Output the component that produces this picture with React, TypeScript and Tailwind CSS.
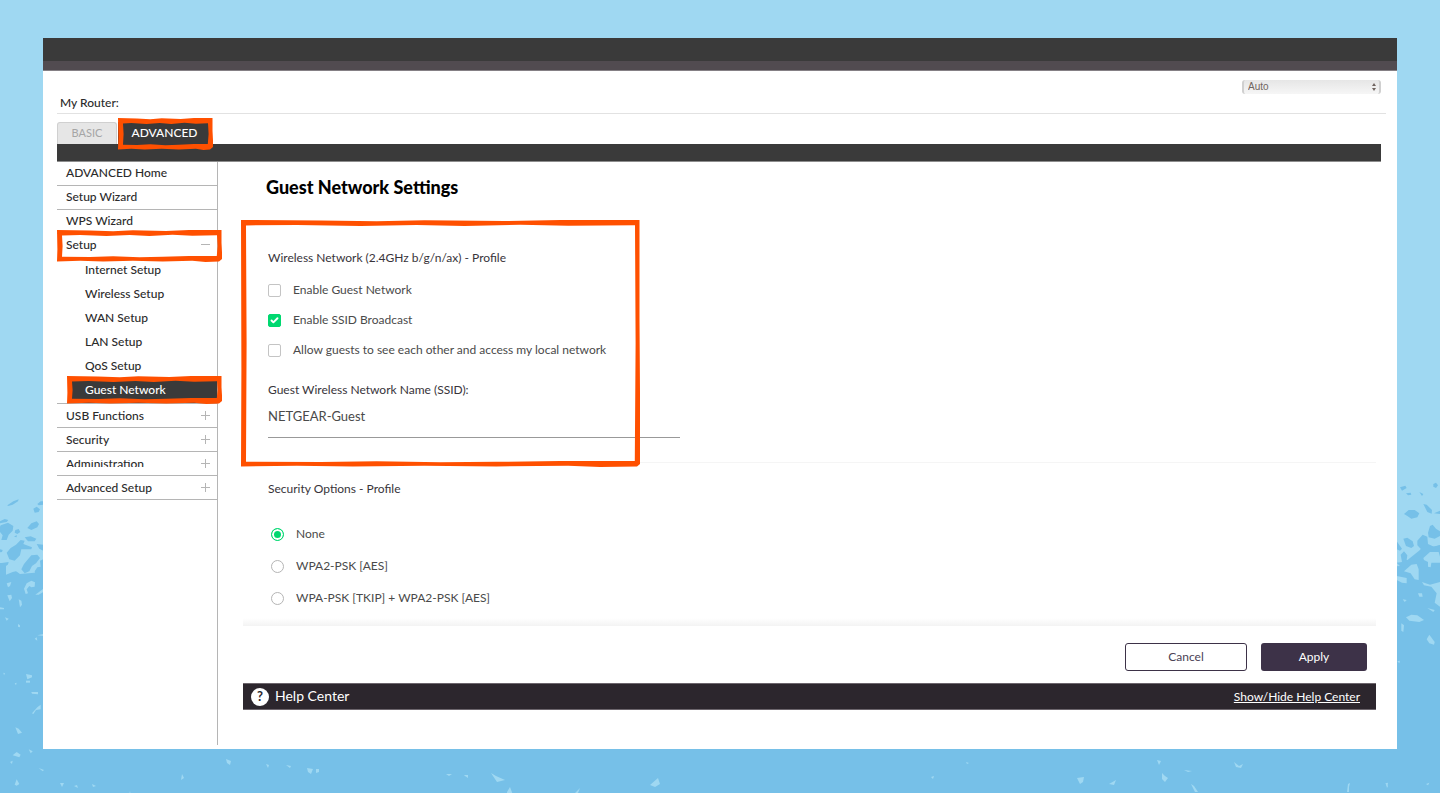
import { useState } from "react";
import { Check } from "lucide-react";

const topItems = ["ADVANCED Home", "Setup Wizard", "WPS Wizard"];
const setupItems = ["Internet Setup", "Wireless Setup", "WAN Setup", "LAN Setup", "QoS Setup"];
const bottomItems = ["USB Functions", "Security", "Administration", "Advanced Setup"];
const securityOptions = ["None", "WPA2-PSK [AES]", "WPA-PSK [TKIP] + WPA2-PSK [AES]"];

// Water texture: light sky above, darker blue below with a speckled edge
function Backdrop() {
  return (
    <svg
      className="absolute inset-0 h-full w-full"
      viewBox="0 0 1440 793"
      preserveAspectRatio="none"
      aria-hidden="true"
    >
      <rect width="1440" height="793" fill="#9fd8f2" />
      <path fill="#76c0e8" d="M0 563L6 564L20 574L43 572L100 570H1340L1400 566L1420 550L1440 545V793H0Z" />
      <g transform="translate(0 480) scale(0.33333)">
        <g fill="#76c0e8">
          <path d="M22 76L40 64L56 58L54 64L38 74L24 78Z" />
          <path d="M112 72L122 64H130V74L116 76Z" />
          <path d="M100 86L110 80L120 88L116 96L104 98Z" />
          <path d="M0 124L14 117L25 120L20 126L0 130Z" />
          <path d="M2 136L24 128L40 138L38 152L26 164L20 180L4 180L8 166L0 156V140Z" />
          <path d="M82 144L94 130L110 124L117 132L112 142L94 150Z" />
          <path d="M46 150L56 147L61 156L52 162L44 158Z" />
          <path d="M74 172L92 169L109 176L104 184L84 184Z" />
          <path d="M42 170L50 165L50 172Z" />
          <path d="M20 218L32 204L48 194L62 180L74 182L70 192L96 202L94 208L64 208L60 226L44 242L28 238Z" />
          <path d="M110 192L130 194V212L118 206Z" />
          <path d="M0 208L8 210L6 216L0 217Z" />
          <path d="M64 268L72 252L82 240L94 226L112 224L120 234L108 250L96 258L88 274L74 280Z" />
          <path d="M104 274L112 262L122 260L120 242L130 238V310H80L108 296Z" />
          <path d="M0 250L26 246L22 262L18 290H0Z" />
        </g>
        <g fill="#9fd8f2">
          <path d="M18 258L34 246L54 247L60 260L54 272L38 276L18 284Z" />
          <path d="M72 326L80 310L94 302L105 307L104 320L94 322L88 318L80 328L84 340L77 342Z" />
          <path d="M20 310L34 306L30 318L24 322Z" />
          <path d="M22 346L34 344L36 354L29 364Z" />
          <path d="M56 358L64 362L66 374L60 382Z" />
          <path d="M106 344L130 326V336L116 344Z" />
          <path d="M0 382L12 384V388H0Z" />
          <path d="M15 412L26 416L20 422Z" />
          <path d="M54 432L60 436V442L54 440Z" />
          <path d="M104 476L110 472L112 482Z" />
          <path d="M112 466L130 462V468Z" />
          <path d="M78 582L96 586L96 592L82 598Z" />
          <path d="M78 602H90V608H78Z" />
          <path d="M94 636L114 636V643L96 641Z" />
          <path d="M96 700L112 682L122 674V688L108 690L100 702Z" />
          <path d="M44 610L50 608L48 616Z" />
          <path d="M10 578L15 580L12 586Z" />
          <path d="M46 742L56 746L66 758L54 762Z" />
          <path d="M38 826L50 816L62 824L58 832Z" />
          <path d="M86 808L98 814L92 820Z" />
          <path d="M30 846L38 842L36 852Z" />
          <path d="M44 914L50 898L58 912L50 917Z" />
          <path d="M116 864L132 870L128 874Z" />
        </g>
      </g>
      <g transform="translate(1380 470) scale(0.33333)">
        <g fill="#76c0e8">
          <path d="M60 52L76 47L80 54L66 62Z" />
          <path d="M160 42L168 38L174 46L168 54L160 50Z" />
          <path d="M78 70L92 68L94 74L84 76Z" />
          <path d="M118 66L130 72L126 78Z" />
          <path d="M72 132L86 120L104 120L118 130L112 142L94 146L82 138Z" />
          <path d="M130 102L140 104L156 120L155 131L142 126Z" />
          <path d="M162 130L180 122V132Z" />
          <path d="M144 188L150 168L158 164L168 176L180 184V198L164 206L146 202Z" />
          <path d="M70 206L82 203L98 214L102 228L94 234L78 228Z" />
          <path d="M112 212L128 194L142 200L144 222L162 230L180 226V300H96L62 290L50 278L66 276L62 254L72 244L82 256L80 270L98 270L112 258L122 236L112 226Z" />
          <path d="M50 214L66 236L60 242L50 238Z" />
        </g>
        <g fill="#9fd8f2">
          <path d="M130 264L150 246H176L180 260V278H154L152 292L144 290V276L132 270Z" />
          <path d="M72 304L94 284L110 282L116 298L116 330L104 328L92 310Z" />
          <path d="M50 318L80 324L80 340L66 338L50 330Z" />
          <path d="M126 336L150 344L180 336V410L164 398L170 370L154 350L132 346Z" />
          <path d="M114 370L126 370L128 380L118 380Z" />
          <path d="M68 388L80 390L74 396Z" />
          <path d="M142 414L164 420L160 426Z" />
          <path d="M78 442L94 434L112 436L132 450L118 456L88 452Z" />
          <path d="M64 460L72 466L70 486L64 482Z" />
          <path d="M140 508L148 494L164 516L162 524L148 520Z" />
          <path d="M52 574L60 572L58 580Z" />
          <path d="M16 940L24 938L22 950Z" />
          <path d="M138 942L148 938L144 946Z" />
        </g>
      </g>
      <g fill="#9fd8f2">
        <path d="M226 759l5 2l-1 4l-3 -2zM266 764l3 1l-1 3zM286 765l5 1l-1 2zM307 768l6 1l-2 5l-3 -2zM316 769l3 0l0 3l-3 1z" />
        <path d="M182 774l2 4l-3 2zM129 795l1 -4l1 5zM128 794l2 -1l0 6l-3 1zM127 797l2 -3l1 6z" />
        <path d="M60 783h4l-2 4zM74 786l3 -1l1 3zM92 784l4 2l-3 1z" />
        <path d="M446 774h6l-3 2zM464 775h4v3l-3 -2zM491 773l5 3l9 4l-8 2zM508 800l3 -2l2 7l-4 2z" />
        <path d="M507 792l3 -5l3 8l-4 4l-2 -3zM575 793l5 -5l-2 5zM650 785l8 -7l2 6l-5 3z" />
        <path d="M966 762l3 1l-2 1zM931 777l3 -1l-1 3zM1077 778l7 -1l-1 5l-3 2zM1059 795l2 1l-2 1z" />
        <path d="M1157 760l4 1l-2 4zM1234 762l5 4l4 -2l-2 4l-5 -1zM1162 773l3 3l3 2l-3 4l-3 -3z" />
        <path d="M1184 770l8 1l-4 1zM1109 784l7 -4l-2 5zM1191 784l3 2l4 6h-3zM1347 792l1 -8l2 -1l-1 4v5zM1386 784l2 2l-1 2z" />
      </g>
    </svg>
  );
}

// Hand-drawn marker frame. Edges wander by up to a pixel along their length.
function Marker({ width: w, height: h, className }: { width: number; height: number; className: string }) {
  const outer = [
    [0, 0], [w * 0.2, 0.5], [w * 0.34, 1.2], [w * 0.46, 0.3], [w * 0.66, 1], [w * 0.8, 0], [w - 0.5, 0],
    [w - 0.5, h * 0.4], [w, h * 0.7], [w, h - 3], [w - 3, h - 0.5],
    [w * 0.9, h], [w * 0.82, h - 1.2], [w * 0.64, h - 0.6], [w * 0.46, h - 1.2], [w * 0.28, h - 0.4], [w * 0.14, h - 1.2], [0, h - 0.5],
    [0.4, h * 0.6],
  ];
  const inner = [
    [5, 5.4], [w * 0.14, 5], [w * 0.3, 6], [w * 0.44, 5], [w * 0.56, 6], [w * 0.7, 4.8], [w * 0.82, 5.8], [w - 5, 5.2],
    [w - 4.4, h * 0.5], [w - 5.2, h - 6],
    [w * 0.8, h - 6], [w * 0.64, h - 5.2], [w * 0.5, h - 4.8], [w * 0.34, h - 5.8], [w * 0.2, h - 5], [5, h - 5.2],
    [5.6, h * 0.5],
  ];
  const d = [outer, inner].map((pts) => `M${pts.map((p) => p.join(" ")).join("L")}Z`).join("");
  return (
    <svg
      className={`pointer-events-none absolute ${className}`}
      width={w}
      height={h}
      viewBox={`0 0 ${w} ${h}`}
      aria-hidden="true"
    >
      <path fill="#ff5000" fillRule="evenodd" d={d} />
    </svg>
  );
}

function CheckRow({ label, defaultChecked = false }: { label: string; defaultChecked?: boolean }) {
  return (
    <label className="flex h-5 w-fit items-center gap-3 text-[#4a4a4a]">
      <span className="grid size-[13px] place-items-center">
        <input
          type="checkbox"
          defaultChecked={defaultChecked}
          className="peer col-start-1 row-start-1 size-[13px] appearance-none rounded-xs border border-[#c4c4c4] bg-white checked:border-[#00d870] checked:bg-[#00d870]"
        />
        <Check
          className="pointer-events-none col-start-1 row-start-1 hidden size-[9px] text-white peer-checked:block"
          strokeWidth={5}
        />
      </span>
      {label}
    </label>
  );
}

function Expander({ open = false }: { open?: boolean }) {
  return (
    <svg className="size-[9px]" viewBox="0 0 9 9" stroke="#b5b5b5" aria-hidden="true">
      <path d={open ? "M0 4.5H9" : "M0 4.5H9M4.5 0V9"} />
    </svg>
  );
}

function Sidebar() {
  return (
    <nav className="w-[161px] shrink-0 self-stretch border-r border-[#b5b5b5] text-xs font-medium text-[#2b2b2b]">
      {topItems.map((item) => (
        <a key={item} href="#" className="flex h-6 items-center border-b border-[#b5b5b5] pb-0.5 pl-[9px]">
          {item}
        </a>
      ))}
      <div className="relative">
        <a href="#" className="flex h-[23px] items-center justify-between pr-[7px] pb-0.5 pl-[9px]">
          Setup
          <Expander open />
        </a>
        <Marker width={165} height={32} className="-top-1 left-0" />
      </div>
      <div className="pt-px">
        {setupItems.map((item) => (
          <a key={item} href="#" className="flex h-6 items-center pl-[28px]">
            {item}
          </a>
        ))}
      </div>
      <div className="relative ml-3 border-b border-[#3a3a3a] bg-[#3a3a3a] text-white">
        <a href="#" className="flex h-6 items-center pl-4">
          Guest Network
        </a>
        <Marker width={155} height={28} className="-top-0.5 -left-0.5" />
      </div>
      <div className="border-t border-[#b5b5b5]">
        {bottomItems.map((item) => (
          <a
            key={item}
            href="#"
            className="flex h-6 items-center justify-between border-b border-[#b5b5b5] pr-[7px] pl-[9px]"
          >
            {item === "Administration" ? (
              <span className="h-[7px] overflow-hidden leading-[7px]">{item}</span>
            ) : (
              item
            )}
            <Expander />
          </a>
        ))}
      </div>
    </nav>
  );
}

function GuestSettings() {
  const [ssid, setSsid] = useState("NETGEAR-Guest");
  const [security, setSecurity] = useState(securityOptions[0]);

  return (
    <main className="min-w-0 flex-1 pr-[21px] pb-[35px] pl-[25px] text-xs text-[#38343a]">
      <h1 className="pt-[15px] pl-[23px] text-lg leading-5 font-black text-black">Guest Network Settings</h1>

      <section className="relative mt-[23px] border-b border-[#f5f5f5] pt-7 pb-6 pl-[25px]">
        <h2 className="leading-5">Wireless Network (2.4GHz b/g/n/ax) - Profile</h2>
        <div className="mt-3 flex flex-col gap-2.5">
          <CheckRow label="Enable Guest Network" />
          <CheckRow label="Enable SSID Broadcast" defaultChecked />
          <CheckRow label="Allow guests to see each other and access my local network" />
        </div>
        <label htmlFor="ssid" className="mt-5 block w-fit leading-5">
          Guest Wireless Network Name (SSID):
        </label>
        <input
          id="ssid"
          value={ssid}
          onChange={(e) => setSsid(e.target.value)}
          className="mt-1.5 block h-8 w-[412px] border-b border-[#999] pb-[11px] text-[13px] leading-5 text-[#4a4a4a] outline-none"
        />
        <Marker width={399} height={247} className="top-0 -left-0.5" />
      </section>

      <section className="pt-4 pl-[25px]">
        <h2 className="leading-5">Security Options - Profile</h2>
        <div className="mt-[25px] flex flex-col gap-3 pl-[3px]">
          {securityOptions.map((option) => (
            <label key={option} className="flex h-5 w-fit items-center gap-3 text-[#4a4a4a]">
              <input
                type="radio"
                name="security"
                checked={security === option}
                onChange={() => setSecurity(option)}
                className="size-[13px] appearance-none rounded-full border border-[#b5b5b5] bg-white checked:border-[#00d870] checked:bg-[#00d870] checked:shadow-[inset_0_0_0_2px_white]"
              />
              {option}
            </label>
          ))}
        </div>
      </section>

      <div className="mt-2.5 h-2 bg-linear-to-b from-white to-[#f3f3f3]" />
      <div className="flex justify-end gap-3.5 pt-[17px] pr-[9px]">
        <button className="h-7 w-[122px] rounded-[3px] border border-[#3d3248] text-[#4b4255]">Cancel</button>
        <button className="h-7 w-[106px] rounded-[3px] bg-[#3d3248] text-white">Apply</button>
      </div>
      <footer className="mt-3 flex h-[27px] items-center justify-between border-y border-[#6c656c] bg-[#2c262d] pr-4 pl-2 text-white">
        <span className="flex items-center gap-1.5 text-[14px]">
          <span className="flex size-[18px] items-center justify-center rounded-full bg-white text-[13px] font-bold text-[#2c262d]">
            ?
          </span>
          Help Center
        </span>
        <a href="#" className="text-xs underline">
          Show/Hide Help Center
        </a>
      </footer>
    </main>
  );
}

export default function App() {
  return (
    <div className="relative min-h-screen px-[43px] pt-[38px] pb-11 font-['Lato','Liberation_Sans',sans-serif]">
      <Backdrop />
      <div className="relative bg-white">
        <header className="h-[33px] border-b border-[#858085] bg-[#3a3a3a] pt-[23px]">
          <div className="h-[9px] bg-[#514b50]" />
        </header>

        <div className="mr-[11px] ml-3.5 flex h-[43px] items-end justify-between border-b border-[#e2e2e2] pr-[5px] pl-[3px]">
          <span className="text-xs leading-5 font-medium text-[#2b2b2b]">My Router:</span>
          <div className="relative mb-[19px]">
            <select
              aria-label="Language"
              className="block h-3.5 w-[139px] appearance-none rounded-[3px] border-x-2 border-[#d0d0d0] bg-linear-to-b from-[#e6e6e6] to-[#f6f6f6] pl-1 font-['Liberation_Sans',sans-serif] text-[10px] leading-3 text-[#706560]"
            >
              <option>Auto</option>
            </select>
            <svg
              className="pointer-events-none absolute top-[3px] right-1 h-2 w-1.5"
              viewBox="0 0 6 8"
              fill="#706560"
              aria-hidden="true"
            >
              <path d="M1 3L3 0L5 3ZM1 5H5L3 8Z" />
            </svg>
          </div>
        </div>

        <div className="mr-4 ml-3.5">
          <div className="flex items-end pt-2">
            <button className="block h-[22px] w-[60px] rounded-t-[3px] border border-b-0 border-[#d0d0d0] bg-[#e6e6e6] text-[11px] text-[#a5a5a5]">
              BASIC
            </button>
            <div className="relative ml-px">
              <button className="block h-[22px] w-[93px] bg-[#3a3a3a] text-xs font-medium text-white">ADVANCED</button>
              <Marker width={95} height={32} className="-top-1 left-0 z-10" />
            </div>
          </div>
          <div className="h-[18px] border-b border-[#8d8d8d] bg-[#3a3a3a]" />
        </div>

        <div className="ml-3.5 flex pb-1">
          <Sidebar />
          <GuestSettings />
        </div>
      </div>
    </div>
  );
}
